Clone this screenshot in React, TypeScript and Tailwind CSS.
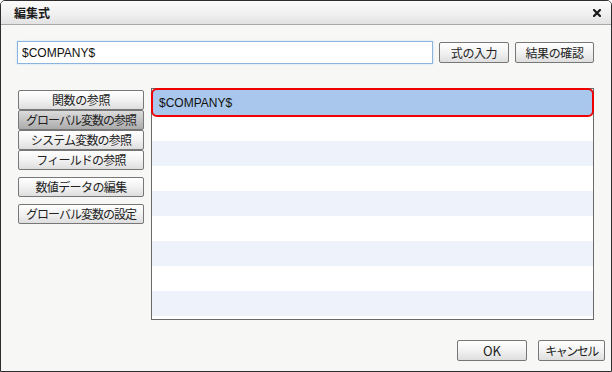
import { type ReactNode } from 'react'

const JP = "font-['Noto_Sans_CJK_JP','Noto_Sans',sans-serif]"

function Btn({
  children,
  className = '',
  pressed = false,
}: {
  children: ReactNode
  className?: string
  pressed?: boolean
}) {
  return (
    <button
      type="button"
      className={
        (pressed
          ? 'bg-[linear-gradient(180deg,#dcdcdc_0%,#c4c4c4_50%,#ababab_100%)] '
          : 'bg-[linear-gradient(180deg,#ffffff_0%,#f2f2f2_50%,#dedede_100%)] ') +
        `flex items-center justify-center rounded-[2px] border border-[#777] text-[12px] leading-none text-[#222] ${JP} ${className}`
      }
    >
      {children}
    </button>
  )
}

export default function App() {
  const rows = Array.from({ length: 9 }, (_, i) => i)

  return (
    <div className="flex h-[372px] w-[612px] flex-col overflow-hidden rounded-t-[5px] border border-[#2e2e2e] bg-[#f7f8f6]">
      {/* title bar */}
      <div className="flex h-[24px] shrink-0 items-center justify-between border-b border-[#a8a8a8] bg-[linear-gradient(180deg,#fbfbfb_0%,#efefef_60%,#e2e2e2_100%)] pl-[13px] pr-[10px]">
        <span className={`text-[12px] font-bold leading-none text-[#1a1a1a] ${JP}`}>編集式</span>
        <svg width="8" height="8" viewBox="0 0 8 8" className="mt-[1px]">
          <path d="M1 1L7 7M7 1L1 7" stroke="#1a1a1a" strokeWidth="2.2" strokeLinecap="square" />
        </svg>
      </div>

      {/* expression row */}
      <div className="mt-[16px] flex items-center pl-[16px]">
        <div className="flex h-[23px] w-[416px] items-center border border-[#8db4dc] bg-white pl-[4px] shadow-[0_0_2px_#c4dcf3]">
          <span className="font-['Liberation_Sans',Arial,sans-serif] text-[12px] leading-none text-[#111]">$COMPANY$</span>
        </div>
        <Btn className="ml-[6px] h-[21px] w-[70px] tracking-[-0.4px]">式の入力</Btn>
        <Btn className="ml-[6px] h-[21px] w-[79px] tracking-[-0.4px]">結果の確認</Btn>
      </div>

      {/* main */}
      <div className="mt-[24px] flex pl-[17px]">
        <div className="flex w-[126px] flex-col pt-[2px]">
          <Btn className="h-[20px] w-full tracking-[-0.4px]">関数の参照</Btn>
          <Btn pressed className="h-[20px] w-full tracking-[-1px]">グローバル変数の参照</Btn>
          <Btn className="h-[20px] w-full tracking-[-0.8px]">システム変数の参照</Btn>
          <Btn className="h-[20px] w-full tracking-[-0.8px]">フィールドの参照</Btn>
          <Btn className="mt-[7px] h-[20px] w-full tracking-[-0.6px]">数値データの編集</Btn>
          <Btn className="mt-[7px] h-[20px] w-full tracking-[-1px]">グローバル変数の設定</Btn>
        </div>

        <div className="ml-[7px] flex h-[232px] w-[443px] flex-col border border-[#6a6a6a] bg-white">
          <div className="relative z-10 -mx-px -mt-px mb-[-1px] flex h-[29px] shrink-0 items-center rounded-[6px] border-2 border-[#f00000] bg-[#a9c6ec] pl-[6px]">
            <span className="font-['Liberation_Sans',Arial,sans-serif] text-[12px] leading-none text-[#111]">$COMPANY$</span>
          </div>
          <div className="flex-1 overflow-hidden">
            {rows.map((i) => (
              <div key={i} className={i % 2 === 0 ? 'h-[25px] bg-white' : 'h-[25px] bg-[#eef3fb]'} />
            ))}
          </div>
        </div>
      </div>

      {/* footer */}
      <div className="mt-[20px] flex justify-end pr-[6px]">
        <Btn className="h-[21px] w-[70px] font-['Liberation_Sans',Arial,sans-serif] text-[13px]">OK</Btn>
        <Btn className="ml-[11px] h-[21px] w-[67px] tracking-[-1.5px]">キャンセル</Btn>
      </div>
    </div>
  )
}
